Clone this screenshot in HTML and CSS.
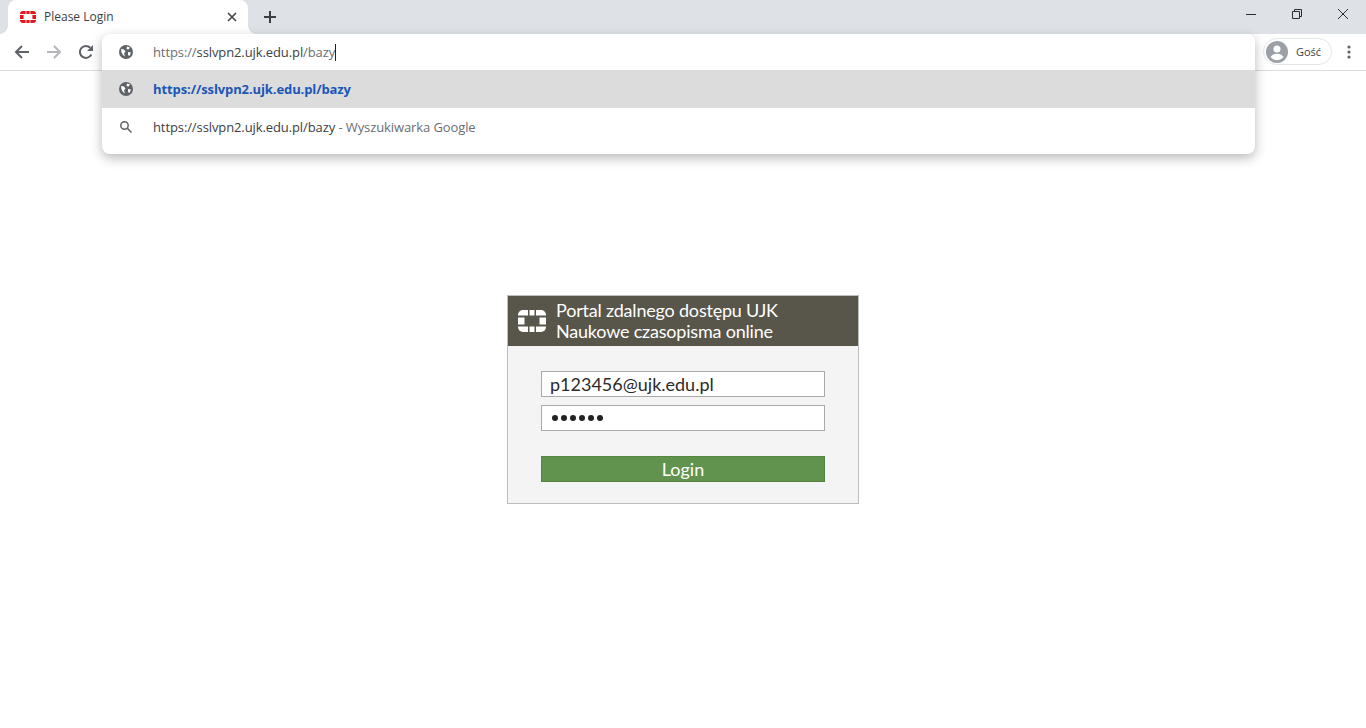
FILE: index.html
```html
<!DOCTYPE html>
<html lang="pl">
<head>
<meta charset="utf-8">
<title>Please Login</title>
<link rel="stylesheet" href="styles.css">
</head>
<body>
<header class="chrome">
  <div class="tabstrip">
    <div class="tab">
      <svg class="favicon" width="16" height="12" viewBox="0 0 16 12"><g fill="#e2181c"><path d="M3 0h2.6v3H0V3a3 3 0 0 1 3-3z"/><path d="M6.4 0h3.2v3H6.4z"/><path d="M10.4 0H13a3 3 0 0 1 3 3v0h-5.600z"/><path d="M0 4h3.600v4H0z"/><path d="M12.400 4H16v4h-3.600z"/><path d="M0 9h5.600v3H3a3 3 0 0 1-3-3z"/><path d="M6.400 9h3.200v3H6.400z"/><path d="M10.400 9H16a3 3 0 0 1-3 3h-2.600z"/></g></svg>
      <span class="tab-title">Please Login</span>
      <svg class="tab-close" width="10" height="10" viewBox="0 0 10 10"><path d="M1 1l8 8M9 1l-8 8" stroke="#44474c" stroke-width="1.700"/></svg>
    </div>
    <svg class="new-tab" width="12" height="12" viewBox="0 0 12 12"><path d="M6 0v12M0 6h12" stroke="#3c4043" stroke-width="2"/></svg>
    <div class="window-controls">
      <svg width="12" height="12" viewBox="0 0 12 12"><path d="M1 6.500h10" stroke="#2a2c30" stroke-width="1"/></svg>
      <svg width="12" height="12" viewBox="0 0 12 12"><path d="M1.500 3.500h7v7h-7zM3.500 3.500v-2h7v7h-2" fill="none" stroke="#2a2c30" stroke-width="1"/></svg>
      <svg width="12" height="12" viewBox="0 0 12 12"><path d="M1 1l10 10M11 1L1 11" stroke="#2a2c30" stroke-width="1"/></svg>
    </div>
  </div>
  <div class="toolbar">
    <div class="nav">
      <svg width="16" height="16" viewBox="0 0 16 16"><path d="M15 8H2M8 2L2 8l6 6" fill="none" stroke="#5f6368" stroke-width="2"/></svg>
      <svg width="16" height="16" viewBox="0 0 16 16"><path d="M1 8h13M8 2l6 6-6 6" fill="none" stroke="#b4b6b9" stroke-width="2"/></svg>
      <svg width="16" height="16" viewBox="0 0 16 16"><path d="M13.300 10.500A6 6 0 1 1 12.300 3.800" fill="none" stroke="#5f6368" stroke-width="2"/><path d="M15 1v6H9z" fill="#5f6368"/></svg>
    </div>
    <div class="toolbar-right">
      <div class="profile">
        <svg width="22" height="22" viewBox="0 0 22 22"><circle cx="11" cy="11" r="11" fill="#9aa0a6"/><circle cx="11" cy="8" r="3.500" fill="#fff"/><path d="M4.500 16c1.500-2.500 4-3.300 6.500-3.300s5 .8 6.500 3.300c-1.500 2-3.800 3.200-6.500 3.200S6 18 4.500 16z" fill="#fff"/></svg>
        <span>Gość</span>
      </div>
      <svg class="menu" width="4" height="14" viewBox="0 0 4 14"><g fill="#5f6368"><circle cx="2" cy="2" r="1.600"/><circle cx="2" cy="7" r="1.600"/><circle cx="2" cy="12" r="1.600"/></g></svg>
    </div>
  </div>
</header>

<div class="omnibox">
  <div class="omni-row omni-input">
    <svg class="omni-icon" width="14" height="14" viewBox="0 0 14 14"><circle cx="7" cy="7" r="7" fill="#5f6368"/><path d="M2 4l3 .5 1.500 2L5 8.500l1 3L4 10 2.500 7.500zM8 1.500l3 1-1.500 2L7.500 4zM9 7l3 .5-1.500 3.500L9 10z" fill="#fff"/></svg>
    <span class="omni-text"><span class="dim">https://</span>sslvpn2.ujk.edu.pl<span class="dim">/bazy</span><span class="caret"></span></span>
  </div>
  <div class="omni-row omni-selected">
    <svg class="omni-icon" width="14" height="14" viewBox="0 0 14 14"><circle cx="7" cy="7" r="7" fill="#5f6368"/><path d="M2 4l3 .5 1.500 2L5 8.500l1 3L4 10 2.500 7.500zM8 1.500l3 1-1.500 2L7.500 4zM9 7l3 .5-1.500 3.500L9 10z" fill="#fff"/></svg>
    <span class="omni-text omni-link">https://sslvpn2.ujk.edu.pl/bazy</span>
  </div>
  <div class="omni-row">
    <svg class="omni-icon" width="14" height="14" viewBox="0 0 14 14"><circle cx="5.500" cy="5.500" r="3.700" fill="none" stroke="#5f6368" stroke-width="1.500"/><path d="M8.300 8.300L12.500 12.500" stroke="#5f6368" stroke-width="1.600"/></svg>
    <span class="omni-text">https://sslvpn2.ujk.edu.pl/bazy<span class="dim"> - Wyszukiwarka Google</span></span>
  </div>
</div>

<main class="page">
  <form class="login-card">
    <div class="login-head">
      <svg class="login-logo" width="28" height="22" viewBox="0 0 28 22"><g fill="#fff"><path d="M5 0h5v5.500H0V5a5 5 0 0 1 5-5z"/><path d="M11.500 0h5v5.500h-5z"/><path d="M18 0h5a5 5 0 0 1 5 5v.5H18z"/><path d="M0 7.500h6.500v7H0z"/><path d="M21.500 7.500H28v7h-6.500z"/><path d="M0 16.500h10V22H5a5 5 0 0 1-5-5z"/><path d="M11.500 16.500h5V22h-5z"/><path d="M18 16.500h10v.5a5 5 0 0 1-5 5h-5z"/></g></svg>
      <div class="login-title">Portal zdalnego dostępu UJK<br>Naukowe czasopisma online</div>
    </div>
    <div class="login-body">
      <div class="field">p123456@ujk.edu.pl</div>
      <div class="field field-pass"><i></i><i></i><i></i><i></i><i></i><i></i></div>
      <div class="login-btn">Login</div>
    </div>
  </form>
</main>
</body>
</html>
```
FILE: styles.css
```css
* { box-sizing: border-box; }
html, body { margin: 0; height: 100%; }
body { background: #fff; font-family: "Open Sans", "Noto Sans", sans-serif; overflow: hidden; position: relative; }

.chrome { display: flex; flex-direction: column; }
.tabstrip { height: 34px; background: #dee1e6; display: flex; align-items: flex-start; position: relative; }
.tab {
  width: 240px; height: 34px; margin-left: 8px; background: #fff;
  border-radius: 8px 8px 0 0; display: flex; align-items: center; padding: 0 11px 1px 12px; position: relative;
}
.tab::before, .tab::after { content: ""; position: absolute; bottom: 0; width: 8px; height: 8px; }
.tab::before { left: -8px; background: radial-gradient(circle at 0 0, transparent 7.500px, #fff 8px); }
.tab::after { right: -8px; background: radial-gradient(circle at 100% 0, transparent 7.500px, #fff 8px); }
.favicon { flex: none; }
.tab-title { margin-left: 8px; font-size: 12px; color: #3c4043; flex: 1; white-space: nowrap; }
.tab-close { flex: none; }
.new-tab { margin: 11px 0 0 16px; flex: none; }
.window-controls { margin-left: auto; display: flex; gap: 34px; padding: 8px 17px 0 0; }

.toolbar { height: 37px; background: #fff; border-bottom: 1px solid #dadce0; display: flex; align-items: center; justify-content: space-between; padding: 0 15px 1px 14px; }
.nav { display: flex; gap: 16px; }
.toolbar-right { display: flex; align-items: center; gap: 15px; }
.profile { height: 27px; width: 69px; border: 1px solid #e3e5e8; border-radius: 14px; display: flex; align-items: center; padding-left: 2px; gap: 8px; font-size: 11px; color: #3c4043; }
.menu { flex: none; }

.omnibox {
  position: absolute; left: 102px; top: 34px; width: 1153px; height: 120px;
  background: #fff; border-radius: 8px; box-shadow: 0 4px 12px rgba(0,0,0,.28); overflow: hidden;
}
.omni-row { height: 38px; display: flex; align-items: center; padding-left: 17px; font-size: 13px; color: #3c4043; white-space: nowrap; }
.omni-input { height: 36px; }
.omni-selected { background: #dcdcdc; }
.omni-icon { flex: none; }
.omni-text { margin-left: 20px; letter-spacing: -.1px; }
.omni-link { color: #1a56b8; font-weight: 700; font-size: 13px; }
.dim { color: #6a6e73; }
.caret { display: inline-block; width: 1px; height: 17px; background: #202124; vertical-align: -4px; }

.page { display: flex; justify-content: center; padding-top: 224px; }
.login-card { width: 352px; height: 209px; background: #f4f4f4; border: 1px solid #bdbdbd; font-family: Lato, sans-serif; }
.login-head { height: 50px; background: #58554a; display: flex; align-items: center; padding-left: 10px; gap: 10px; color: #fff; }
.login-logo { flex: none; }
.login-title { font-size: 18px; line-height: 21px; letter-spacing: -.2px; }
.login-body { padding: 25px 33px 0; display: flex; flex-direction: column; }
.field { height: 26px; background: #fff; border: 1px solid #a9a9a9; font-size: 18px; line-height: 24px; padding-left: 8px; color: #2b2b2b; margin-bottom: 8px; }
.field-pass { display: flex; align-items: center; gap: 3px; padding-left: 10px; margin-bottom: 25px; }
.field-pass i { width: 6px; height: 6px; border-radius: 50%; background: #222; }
.login-btn { height: 26px; background: #61934f; border: 1px solid #55863f; color: #fff; text-align: center; font-size: 18px; line-height: 24px; }
```
